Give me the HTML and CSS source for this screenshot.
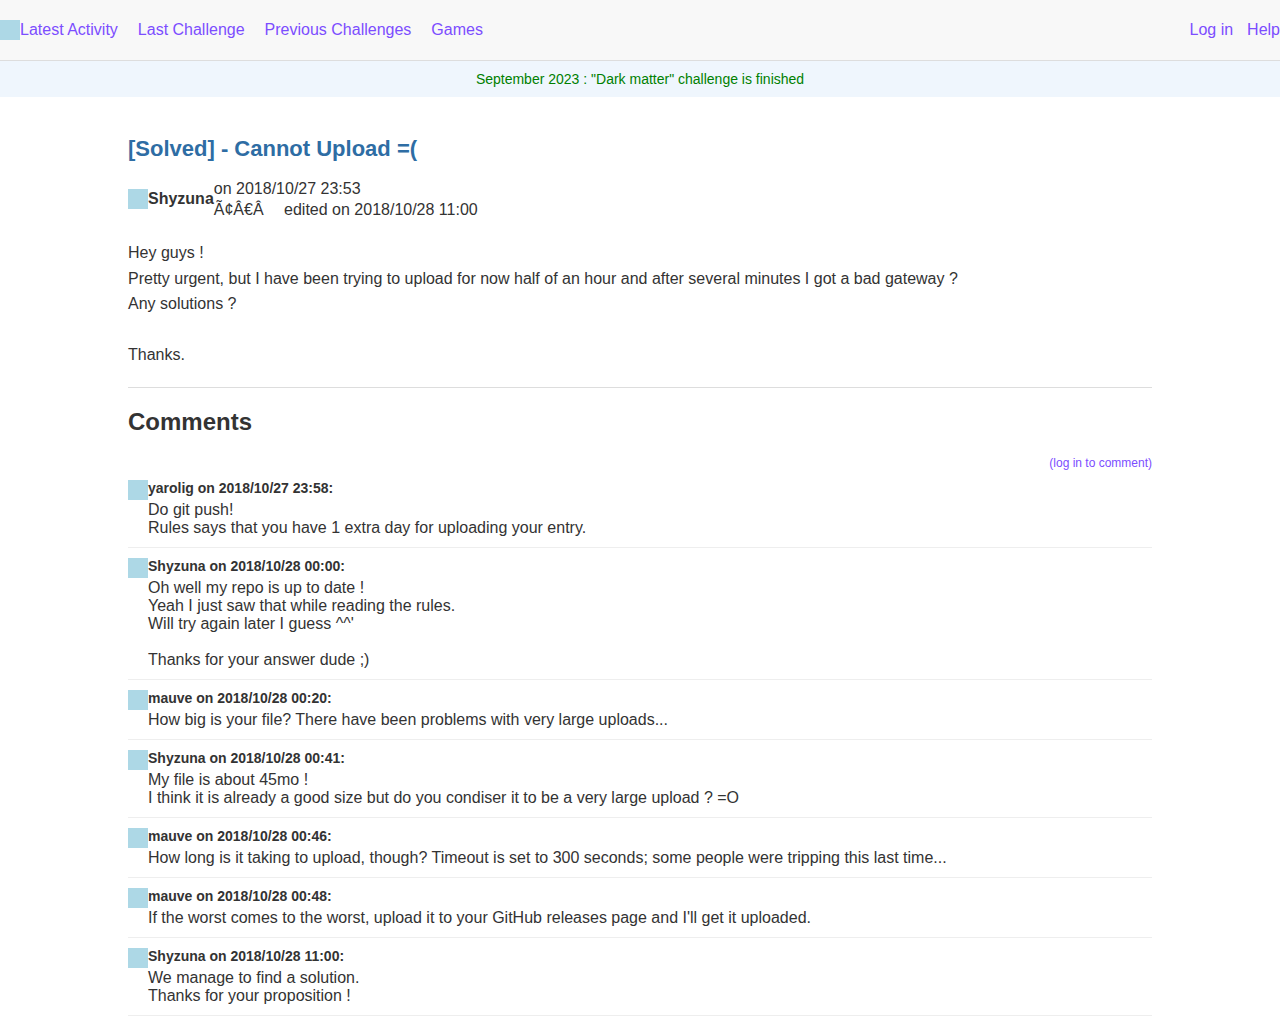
FILE: index.html
```html
<!DOCTYPE html>
<html>
<head>
<meta charset="utf-8">
<title>[Solved] - Cannot Upload =(</title>
<link rel="stylesheet" href="styles.css">
</head>
<body>
<nav class="topnav">
  <div class="nav-left">
    <span class="avatar"></span>
    <div class="nav-links">
      <a href="#">Latest Activity</a>
      <a href="#">Last Challenge</a>
      <a href="#">Previous Challenges</a>
      <a href="#">Games</a>
    </div>
  </div>
  <div class="nav-right">
    <a href="#">Log in</a>
    <a href="#">Help</a>
  </div>
</nav>
<div class="banner">September 2023 : "Dark matter" challenge is finished</div>
<main class="content">
  <h1 class="title">[Solved] - Cannot Upload =(</h1>
  <div class="author-row">
    <span class="avatar"></span>
    <span class="author-name">Shyzuna</span>
    <div class="dates">
      <div>on 2018/10/27 23:53</div>
      <div>Ã¢Â€Â&emsp; edited on 2018/10/28 11:00</div>
    </div>
  </div>
  <div class="post-body">
    Hey guys !<br>
    Pretty urgent, but I have been trying to upload for now half of an hour and after several minutes I got a bad gateway ?<br>
    Any solutions ?<br>
    <br>
    Thanks.
  </div>
  <hr class="sep">
  <h2 class="comments-title">Comments</h2>
  <div class="login-comment"><a href="#">(log in to comment)</a></div>
  <div class="comments">
    <div class="comment">
      <div class="comment-head"><span class="avatar"></span><span class="comment-author">yarolig on 2018/10/27 23:58:</span></div>
      <div class="comment-body">Do git push!<br>Rules says that you have 1 extra day for uploading your entry.</div>
    </div>
    <div class="comment">
      <div class="comment-head"><span class="avatar"></span><span class="comment-author">Shyzuna on 2018/10/28 00:00:</span></div>
      <div class="comment-body">Oh well my repo is up to date !<br>Yeah I just saw that while reading the rules.<br>Will try again later I guess ^^'<br><br>Thanks for your answer dude ;)</div>
    </div>
    <div class="comment">
      <div class="comment-head"><span class="avatar"></span><span class="comment-author">mauve on 2018/10/28 00:20:</span></div>
      <div class="comment-body">How big is your file? There have been problems with very large uploads...</div>
    </div>
    <div class="comment">
      <div class="comment-head"><span class="avatar"></span><span class="comment-author">Shyzuna on 2018/10/28 00:41:</span></div>
      <div class="comment-body">My file is about 45mo !<br>I think it is already a good size but do you condiser it to be a very large upload ? =O</div>
    </div>
    <div class="comment">
      <div class="comment-head"><span class="avatar"></span><span class="comment-author">mauve on 2018/10/28 00:46:</span></div>
      <div class="comment-body">How long is it taking to upload, though? Timeout is set to 300 seconds; some people were tripping this last time...</div>
    </div>
    <div class="comment">
      <div class="comment-head"><span class="avatar"></span><span class="comment-author">mauve on 2018/10/28 00:48:</span></div>
      <div class="comment-body">If the worst comes to the worst, upload it to your GitHub releases page and I'll get it uploaded.</div>
    </div>
    <div class="comment">
      <div class="comment-head"><span class="avatar"></span><span class="comment-author">Shyzuna on 2018/10/28 11:00:</span></div>
      <div class="comment-body">We manage to find a solution.<br>Thanks for your proposition !</div>
    </div>
  </div>
</main>
</body>
</html>
```

FILE: styles.css
```css
html, body {
  margin: 0;
  padding: 0;
}
body {
  font-family: "Liberation Sans", Arial, sans-serif;
  font-size: 16px;
  color: #333;
  background: #fff;
  overflow-x: hidden;
}
a {
  color: #7c4dff;
  text-decoration: none;
}
.avatar {
  display: inline-block;
  width: 20px;
  height: 20px;
  background: #add8e6;
  flex: none;
}
.topnav {
  height: 60px;
  background: #f8f8f8;
  border-bottom: 1px solid #ddd;
  display: flex;
  align-items: center;
  justify-content: space-between;
}
.nav-left {
  display: flex;
  align-items: center;
}
.nav-links {
  display: flex;
  gap: 20px;
}
.nav-right {
  display: flex;
  gap: 14px;
  white-space: nowrap;
}
.banner {
  background: #eff6fd;
  color: #008000;
  font-size: 14px;
  height: 36px;
  display: flex;
  align-items: center;
  justify-content: center;
}
.content {
  width: 1024px;
  margin: 0 auto;
}
.title {
  font-size: 22px;
  color: #2e6da4;
  margin: 39px 0 17px;
  line-height: 25px;
}
.author-row {
  display: flex;
  align-items: center;
}
.author-name {
  font-weight: bold;
}
.dates {
  line-height: 21px;
}
.post-body {
  margin-top: 20px;
  line-height: 25.5px;
}
.sep {
  border: 0;
  border-top: 1px solid #ddd;
  margin: 19px 0 0;
}
.comments-title {
  font-size: 24px;
  margin: 20px 0;
  line-height: 28px;
}
.login-comment {
  text-align: right;
  font-size: 12px;
  line-height: 14px;
}
.comment {
  padding: 10px 0;
  border-bottom: 1px solid #eee;
}
.comment-head {
  display: flex;
  align-items: flex-start;
  height: 20px;
}
.comment-author {
  font-weight: bold;
  font-size: 14px;
  line-height: 16px;
}
.comment-body {
  margin-left: 20px;
  margin-top: 1px;
  line-height: normal;
}
```
